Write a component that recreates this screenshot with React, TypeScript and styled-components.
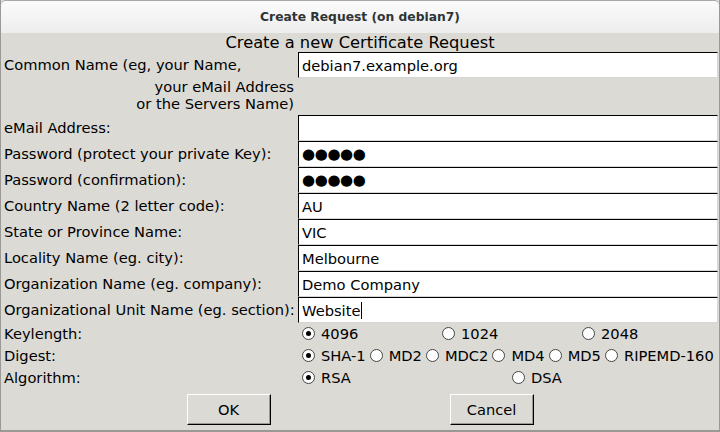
import React from "react";
import styled, { createGlobalStyle } from "styled-components";

const GlobalStyle = createGlobalStyle`
  html, body {
    margin: 0;
    padding: 0;
    background: #dcdad5;
  }
  * {
    box-sizing: border-box;
  }
`;

// Window frame
const Window = styled.div`
  width: 720px;
  height: 432px;
  display: flex;
  flex-direction: column;
  background: #dcdad5;
  border-left: 1px solid #9a9996;
  border-right: 1px solid #9a9996;
  border-bottom: 2px solid #9a9996;
  font-family: "DejaVu Sans", sans-serif;
  font-size: 14.67px;
  color: #000;
  overflow: hidden;
`;

const TitleBar = styled.div`
  height: 33px;
  flex: none;
  display: flex;
  align-items: center;
  justify-content: center;
  background: linear-gradient(#fbfbfb, #ededed);
  border-top: 1px solid #a8a8a6;
  border-radius: 5px 5px 0 0;
  font-weight: bold;
  font-size: 12.3px;
  color: #2e3436;
`;

const Heading = styled.div`
  height: 19px;
  flex: none;
  display: flex;
  align-items: center;
  justify-content: center;
  font-size: 16.3px;
`;

const Form = styled.div`
  display: grid;
  grid-template-columns: 297px 420px;
`;

const Label = styled.div`
  display: flex;
  align-items: center;
  padding-left: 3px;
  padding-bottom: 1px;
  white-space: pre;
`;

// second and third line of the common name hint, right aligned
const Note = styled.div`
  grid-column: 1 / 3;
  height: 37px;
  width: 293px;
  text-align: right;
  line-height: 17px;
  white-space: pre;
`;

const Field = styled.div<{ $secret?: boolean }>`
  height: 26px;
  display: flex;
  align-items: center;
  padding-left: 3px;
  background: #fff;
  border-style: solid;
  border-width: 1px;
  border-color: #000 #d6d6d6 #d6d6d6 #000;
  box-shadow: 0 1px 0 #dcdad5;
  font-size: ${(p) => (p.$secret ? "15px" : "14.67px")};
  letter-spacing: ${(p) => (p.$secret ? "-0.4px" : "0")};
  white-space: pre;
`;

const Caret = styled.span`
  display: inline-block;
  width: 1px;
  height: 17px;
  margin-left: 1px;
  background: #000;
`;

const OptionRow = styled.div`
  display: grid;
  grid-template-columns: 297px 420px;
  height: 22px;
`;

const Options = styled.div<{ $cols?: number }>`
  display: ${(p) => (p.$cols ? "grid" : "flex")};
  grid-template-columns: ${(p) => (p.$cols ? `repeat(${p.$cols}, 1fr)` : "none")};
  align-items: center;
  column-gap: ${(p) => (p.$cols ? "0" : "4px")};
  padding-left: ${(p) => (p.$cols ? "0" : "4px")};
  padding-bottom: 1px;
  & > label {
    padding-left: ${(p) => (p.$cols ? "4px" : "0")};
  }
`;

const Radio = styled.label`
  display: flex;
  align-items: center;
  gap: 6px;
  white-space: nowrap;
`;

const Dot = styled.span<{ $on?: boolean }>`
  width: 13px;
  height: 13px;
  border-radius: 50%;
  border: 1px solid #444;
  background: #fff;
  display: flex;
  align-items: center;
  justify-content: center;
  flex: none;
  &::after {
    content: "";
    width: 5px;
    height: 5px;
    border-radius: 50%;
    background: ${(p) => (p.$on ? "#000" : "transparent")};
  }
`;

const ButtonBar = styled.div`
  display: flex;
  justify-content: center;
  gap: 179px;
  padding-top: 5px;
`;

const Button = styled.button`
  width: 84px;
  height: 31px;
  font-family: "DejaVu Sans", sans-serif;
  font-size: 14.67px;
  color: #000;
  background: #dcdad5;
  border-style: solid;
  border-width: 1px;
  border-color: #fff #000 #000 #fff;
  box-shadow: inset -1px -1px 0 #9a9996;
  padding: 0;
`;

const fields: { label: string; value: string; secret?: boolean; caret?: boolean }[] = [
  { label: "eMail Address:", value: "" },
  { label: "Password (protect your private Key):", value: "●●●●●", secret: true },
  { label: "Password (confirmation):", value: "●●●●●", secret: true },
  { label: "Country Name (2 letter code):", value: "AU" },
  { label: "State or Province Name:", value: "VIC" },
  { label: "Locality Name (eg. city):", value: "Melbourne" },
  { label: "Organization Name (eg. company):", value: "Demo Company" },
  { label: "Organizational Unit Name (eg. section):", value: "Website", caret: true },
];

const RadioItem = ({ text, on }: { text: string; on?: boolean }) => (
  <Radio>
    <Dot $on={on} />
    {text}
  </Radio>
);

const App = () => {
  return (
    <>
      <GlobalStyle />
      <Window>
        <TitleBar>Create Request (on debian7)</TitleBar>
        <Heading>Create a new Certificate Request</Heading>
        <Form>
          <Label>Common Name (eg, your Name,</Label>
          <Field>debian7.example.org</Field>
          <Note>{"your eMail Address\nor the Servers Name)"}</Note>
          {fields.map((f) => (
            <React.Fragment key={f.label}>
              <Label>{f.label}</Label>
              <Field $secret={f.secret}>
                {f.value}
                {f.caret && <Caret />}
              </Field>
            </React.Fragment>
          ))}
        </Form>
        <OptionRow>
          <Label>Keylength:</Label>
          <Options $cols={3}>
            <RadioItem text="4096" on />
            <RadioItem text="1024" />
            <RadioItem text="2048" />
          </Options>
        </OptionRow>
        <OptionRow>
          <Label>Digest:</Label>
          <Options>
            <RadioItem text="SHA-1" on />
            <RadioItem text="MD2" />
            <RadioItem text="MDC2" />
            <RadioItem text="MD4" />
            <RadioItem text="MD5" />
            <RadioItem text="RIPEMD-160" />
          </Options>
        </OptionRow>
        <OptionRow>
          <Label>Algorithm:</Label>
          <Options $cols={2}>
            <RadioItem text="RSA" on />
            <RadioItem text="DSA" />
          </Options>
        </OptionRow>
        <ButtonBar>
          <Button>OK</Button>
          <Button>Cancel</Button>
        </ButtonBar>
      </Window>
    </>
  );
};

export default App;
